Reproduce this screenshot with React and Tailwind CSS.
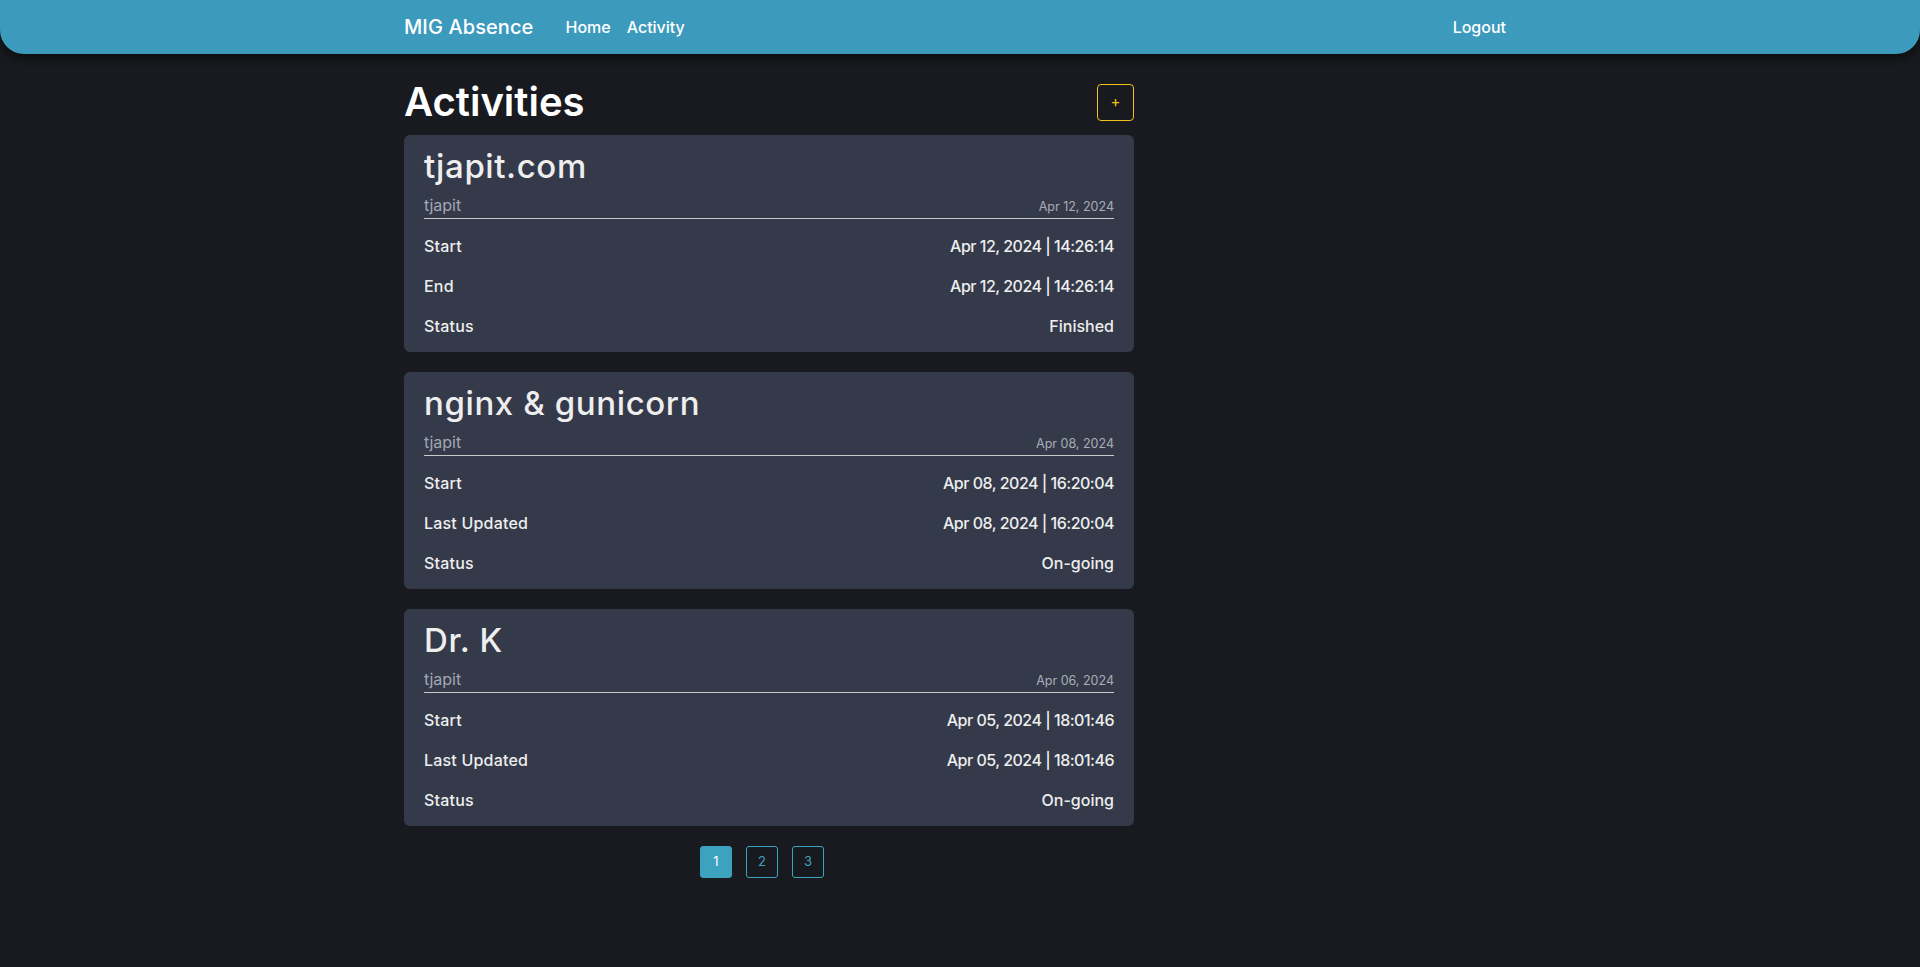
import React from 'react';

const activities = [
  {
    title: 'tjapit.com',
    user: 'tjapit',
    date: 'Apr 12, 2024',
    rows: [
      ['Start', 'Apr 12, 2024 | 14:26:14'],
      ['End', 'Apr 12, 2024 | 14:26:14'],
      ['Status', 'Finished'],
    ],
  },
  {
    title: 'nginx & gunicorn',
    user: 'tjapit',
    date: 'Apr 08, 2024',
    rows: [
      ['Start', 'Apr 08, 2024 | 16:20:04'],
      ['Last Updated', 'Apr 08, 2024 | 16:20:04'],
      ['Status', 'On-going'],
    ],
  },
  {
    title: 'Dr. K',
    user: 'tjapit',
    date: 'Apr 06, 2024',
    rows: [
      ['Start', 'Apr 05, 2024 | 18:01:46'],
      ['Last Updated', 'Apr 05, 2024 | 18:01:46'],
      ['Status', 'On-going'],
    ],
  },
];

function ActivityCard({ item }) {
  return (
    <div className="bg-[#343a4a] rounded-[6px] px-5 pt-3 pb-[6px] mb-[20px] text-[#eeeeee]">
      <h2 className="h-[38px] leading-[38px] text-[33px] font-medium tracking-[0.6px]">
        {item.title}
      </h2>
      <div className="h-[34px] flex items-end justify-between pb-[1px] border-b border-[#c9c9c9]">
        <span className="text-[16px] leading-6 text-[#a3a7b0]">{item.user}</span>
        <span className="text-[12.5px] leading-5 text-[#a9adb5]">{item.date}</span>
      </div>
      <div className="mt-[7px]">
        {item.rows.map(([label, value]) => (
          <div key={label} className="h-10 flex items-center justify-between text-[16px] font-medium">
            <span className="tracking-[0.2px]">{label}</span>
            <span className={value.includes('|') ? 'tracking-[-0.5px]' : ''}>{value}</span>
          </div>
        ))}
      </div>
    </div>
  );
}

export default function App() {
  return (
    <div
      className="min-h-[967px] bg-[#181a1f] text-white"
      style={{ fontFamily: 'Inter, "Open Sans", "Liberation Sans", sans-serif' }}
    >
      {/* header */}
      <header className="h-[54px] bg-[#3c9abc] rounded-b-[24px] shadow-[0_4px_10px_rgba(0,0,0,0.55)]">
        <div className="w-[1112px] mx-auto h-full flex items-center justify-between pr-[10px]">
          <div className="flex items-center">
            <span className="text-[20px] font-medium tracking-[0.1px]">MIG Absence</span>
            <nav className="flex items-center gap-4 ml-[32px] text-[16px] font-medium">
              <a>Home</a>
              <a>Activity</a>
            </nav>
          </div>
          <a className="text-[16px] font-medium">Logout</a>
        </div>
      </header>

      <main className="w-[1112px] mx-auto">
        <div className="w-[730px]">
          <div className="mt-6 mb-[9px] h-12 flex items-center justify-between">
            <h1 className="text-[40px] font-semibold leading-[48px]">Activities</h1>
            <button className="w-[37px] h-[37px] border border-[#f2c118] rounded-[4px] text-[#f2c118] text-[15px] flex items-center justify-center">
              +
            </button>
          </div>

          {activities.map((item) => (
            <ActivityCard key={item.title} item={item} />
          ))}

          <div className="flex justify-center gap-[14px] pr-[14px]">
            {[1, 2, 3].map((n) => (
              <button
                key={n}
                className={`w-8 h-8 rounded-[3px] border border-[#3ca3bf] text-[13px] flex items-center justify-center ${
                  n === 1 ? 'bg-[#3ca3bf] text-white' : 'text-[#3ca3bf]'
                }`}
              >
                {n}
              </button>
            ))}
          </div>
        </div>
      </main>
    </div>
  );
}
